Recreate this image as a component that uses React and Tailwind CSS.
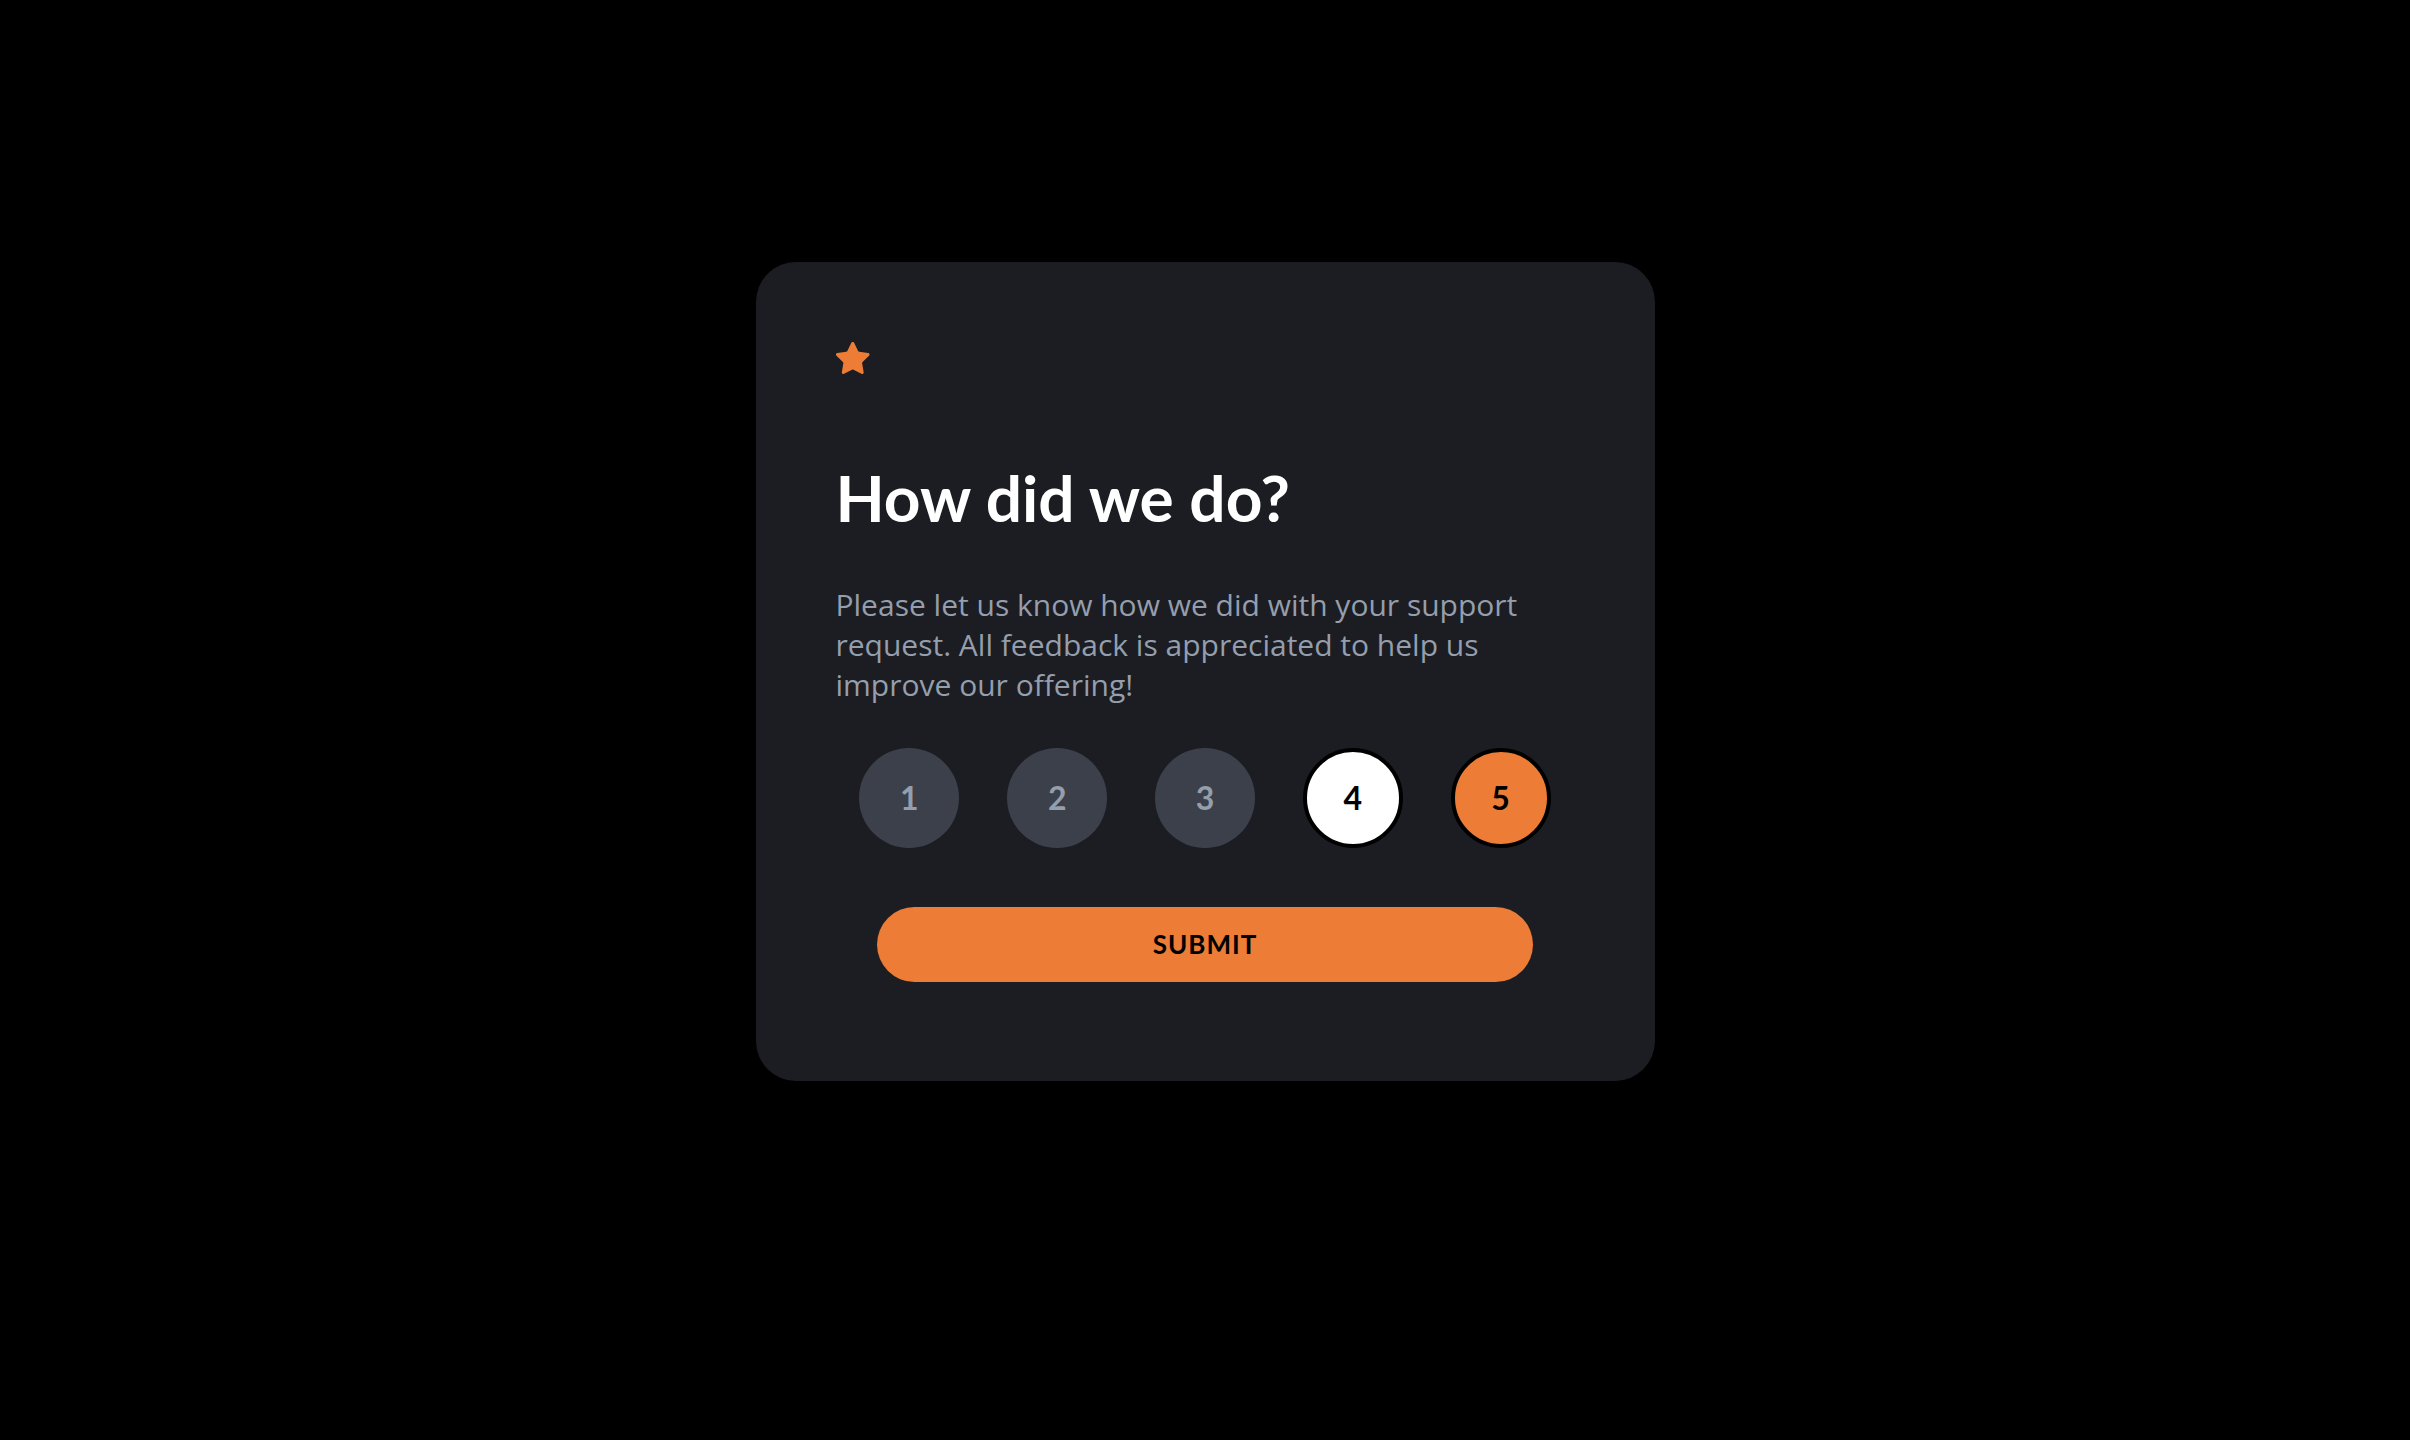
import React from "react";

function Star() {
  return (
    <svg width="34" height="32" viewBox="0 0 17 16" fill="none">
      <path
        d="m9.067.43 1.99 4.031c.112.228.33.386.58.422l4.45.647a.772.772 0 0 1 .427 1.316l-3.22 3.138a.773.773 0 0 0-.222.683l.76 4.431a.772.772 0 0 1-1.12.813l-3.98-2.092a.773.773 0 0 0-.718 0l-3.98 2.092a.772.772 0 0 1-1.119-.813l.76-4.431a.77.77 0 0 0-.222-.683L.212 6.846A.772.772 0 0 1 .64 5.53l4.45-.647a.772.772 0 0 0 .58-.422L7.662.43a.772.772 0 0 1 1.405 0Z"
        fill="#EC7C36"
      />
    </svg>
  );
}

export default function App() {
  const nums = [1, 2, 3, 4, 5];
  return (
    <div
      className="min-h-screen w-full bg-black flex justify-center pt-[262px]"
      style={{ fontFamily: "Lato, 'Noto Sans', sans-serif" }}
    >
      <div className="w-[899px] h-[819px] bg-[#1b1d22] rounded-[40px] px-[80px] pt-[80px] flex flex-col">
        <div className="h-[32px] flex items-start">
          <Star />
        </div>
        <h1 className="mt-[92px] text-[64px] leading-[64px] font-bold text-white">
          How did we do?
        </h1>
        <p className="mt-[55px] text-[30px] leading-[40px] text-[#959eac] w-[720px] font-['Open_Sans',sans-serif]">
          Please let us know how we did with your support request. All feedback is appreciated to help us improve our offering!
        </p>
        <div className="mt-[43px] flex justify-around">
          {nums.map((n) => {
            let cls =
              "w-[100px] h-[100px] rounded-full flex items-center justify-center text-[32px] font-bold ";
            if (n === 4) cls += "bg-white text-black border-[4px] border-black";
            else if (n === 5) cls += "bg-[#ec7c36] text-black border-[4px] border-black";
            else cls += "bg-[#3c404b] text-[#959eac]";
            return (
              <div key={n} className={cls}>
                {n}
              </div>
            );
          })}
        </div>
        <button className="mt-[59px] mx-auto w-[656px] h-[75px] rounded-full bg-[#ec7c36] text-black text-[26px] font-bold tracking-[1px]">
          SUBMIT
        </button>
      </div>
    </div>
  );
}
